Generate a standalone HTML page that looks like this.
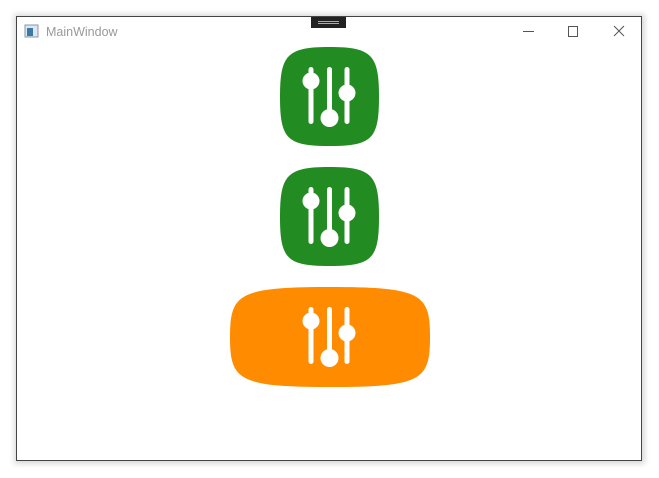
<!DOCTYPE html>
<html><head><style>
body{margin:0;width:659px;height:478px;background:#fff;overflow:hidden;position:relative;font-family:"Liberation Sans",sans-serif}
</style></head><body>
<svg width="659" height="478" style="position:absolute;left:0;top:0">
<defs>
<filter id="sh" x="-5%" y="-5%" width="110%" height="110%"><feGaussianBlur stdDeviation="3"/></filter>
<g id="ic" fill="#fff">
<rect x="308.5" y="67" width="5" height="57" rx="2.5"/>
<rect x="327" y="67" width="5" height="57" rx="2.5"/>
<rect x="344.5" y="67" width="5" height="57" rx="2.5"/>
<circle cx="311" cy="81" r="8.5"/>
<circle cx="329.5" cy="118" r="9"/>
<circle cx="347" cy="93" r="8.5"/>
</g>
</defs>
<rect x="14" y="14" width="631" height="450" fill="#000" opacity="0.15" filter="url(#sh)"/>
<rect x="16.5" y="16.5" width="625" height="444" fill="#fff" stroke="#444" stroke-width="1"/>
<rect x="311" y="17" width="35" height="11" fill="#222"/>
<line x1="318" y1="21.5" x2="339" y2="21.5" stroke="#aaa"/>
<line x1="318" y1="23.5" x2="339" y2="23.5" stroke="#aaa"/>
<rect x="25" y="25" width="13" height="12" fill="#dfe6ee" stroke="#8a97a6"/>
<rect x="27" y="28" width="6" height="8" fill="#3a7aa8"/>
<text x="46" y="36" font-size="12.5" fill="#999">MainWindow</text>
<line x1="523" y1="31.5" x2="534" y2="31.5" stroke="#555"/>
<rect x="568.5" y="26.5" width="9" height="10" fill="none" stroke="#555"/>
<path d="M614 26L624 36M624 26L614 36" stroke="#555"/>
<path d="M280 97C280 55 287 47 329.5 47C372 47 379 55 379 97C379 139 372 146 329.5 146C287 146 280 139 280 97Z" fill="#228b22"/>
<use href="#ic"/>
<path d="M280 217C280 175 287 167 329.5 167C372 167 379 175 379 217C379 259 372 266 329.5 266C287 266 280 259 280 217Z" fill="#228b22"/>
<use href="#ic" y="120"/>
<path d="M230 337C230 294 238 287 330 287C422 287 430 294 430 337C430 380 422 387 330 387C238 387 230 380 230 337Z" fill="#ff8c00"/>
<use href="#ic" y="240"/>
</svg>
</body></html>
